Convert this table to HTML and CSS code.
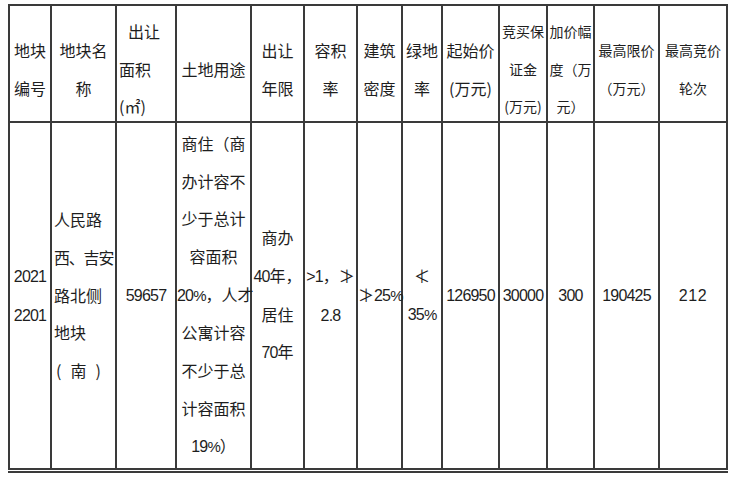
FILE: index.html
```html
<!DOCTYPE html>
<html lang="zh-CN">
<head>
<meta charset="utf-8">
<title>地块出让信息</title>
<link rel="stylesheet" href="styles.css">
</head>
<body>
<div class="sheet">
<table class="grid">
<colgroup>
<col class="c1"><col class="c2"><col class="c3"><col class="c4"><col class="c5"><col class="c6"><col class="c7"><col class="c8"><col class="c9"><col class="c10"><col class="c11"><col class="c12"><col class="c13">
</colgroup>
<thead>
<tr class="head">
<th><div class="hd">地块<br>编号</div></th>
<th><div class="hd">地块名<br>称</div></th>
<th class="left"><div class="hd"><span class="ind">出让</span><br>面积<br>(㎡)</div></th>
<th><div class="hd">土地用途</div></th>
<th><div class="hd">出让<br>年限</div></th>
<th><div class="hd">容积<br>率</div></th>
<th><div class="hd">建筑<br>密度</div></th>
<th><div class="hd">绿地<br>率</div></th>
<th><div class="hd">起始价<br>(万元)</div></th>
<th class="small"><div class="hd">竞买保<br>证金<br>(万元)</div></th>
<th class="small"><div class="hd">加价幅<br>度（万<br>元）</div></th>
<th class="small"><div class="hd">最高限价<br>（万元）</div></th>
<th class="small"><div class="hd">最高竞价<br>轮次</div></th>
</tr>
</thead>
<tbody>
<tr class="body">
<td><span class="num">2021<br>2201</span></td>
<td class="left">人民路<br><span class="tight">西、吉安</span><br>路北侧<br>地块<br><span class="nan">(南)</span></td>
<td><span class="num">59657</span></td>
<td>商住（商<br>办计容不<br>少于总计<br>容面积<br><span class="num">20<span class="pc">%</span></span>，人才<br>公寓计容<br>不少于总<br>计容面积<br><span class="num">19<span class="pc">%</span></span>）</td>
<td>商办<br><span class="num">40</span>年，<br>居住<br><span class="num">70</span>年</td>
<td><span class="num">&gt;1</span>，≯<br><span class="num">2.8</span></td>
<td>≯<span class="num">25<span class="pc">%</span></span></td>
<td>≮<br><span class="num">35<span class="pc">%</span></span></td>
<td><span class="num">126950</span></td>
<td><span class="num">30000</span></td>
<td><span class="num">300</span></td>
<td><span class="num">190425</span></td>
<td><span class="num wide">212</span></td>
</tr>
</tbody>
</table>
</div>
</body>
</html>
```

FILE: styles.css
```css
html {
  margin: 0;
  padding: 0;
  background: #ffffff;
}

body {
  margin: 4px 0 0 8px;
  padding: 0;
  background: #ffffff;
  color: #1e1e1e;
  font-family: "Noto Sans CJK SC", "Noto Sans", sans-serif;
  font-size: 16px;
}

.sheet {
  display: inline-block;
  padding-bottom: 1px;
  border-bottom: 2px solid #3a3a3a;
}

.grid {
  border-collapse: separate;
  border-spacing: 0;
  table-layout: fixed;
  width: 720px;
  border-top: 2px solid #3a3a3a;
  border-left: 2px solid #3a3a3a;
}

.c1 { width: 42px; }
.c2 { width: 65px; }
.c3 { width: 60px; }
.c4 { width: 75px; }
.c5 { width: 53px; }
.c6 { width: 53px; }
.c7 { width: 45px; }
.c8 { width: 40px; }
.c9 { width: 57px; }
.c10 { width: 48px; }
.c11 { width: 47px; }
.c12 { width: 65px; }
.c13 { width: 68px; }

.grid th,
.grid td {
  border-right: 2px solid #3a3a3a;
  border-bottom: 2px solid #3a3a3a;
  padding: 0;
  font-weight: normal;
  text-align: center;
  vertical-align: middle;
  line-height: 37.7px;
  white-space: nowrap;
}

.head {
  height: 117px;
}

.body {
  height: 347px;
}

.hd {
  margin-bottom: -12px;
}

.grid .left {
  text-align: left;
  padding-left: 2px;
}

.ind {
  padding-left: 9px;
}

.grid .small {
  font-size: 14px;
}

.num {
  font-family: "Liberation Sans", "Noto Sans CJK SC", sans-serif;
  font-size: 16px;
  letter-spacing: -0.8px;
}

.num.wide {
  letter-spacing: 0.6px;
}

.pc {
  font-size: 15px;
  letter-spacing: -1px;
}

.tight {
  letter-spacing: -1.2px;
}

.nan {
  letter-spacing: 9px;
  margin-left: 2px;
}
```
